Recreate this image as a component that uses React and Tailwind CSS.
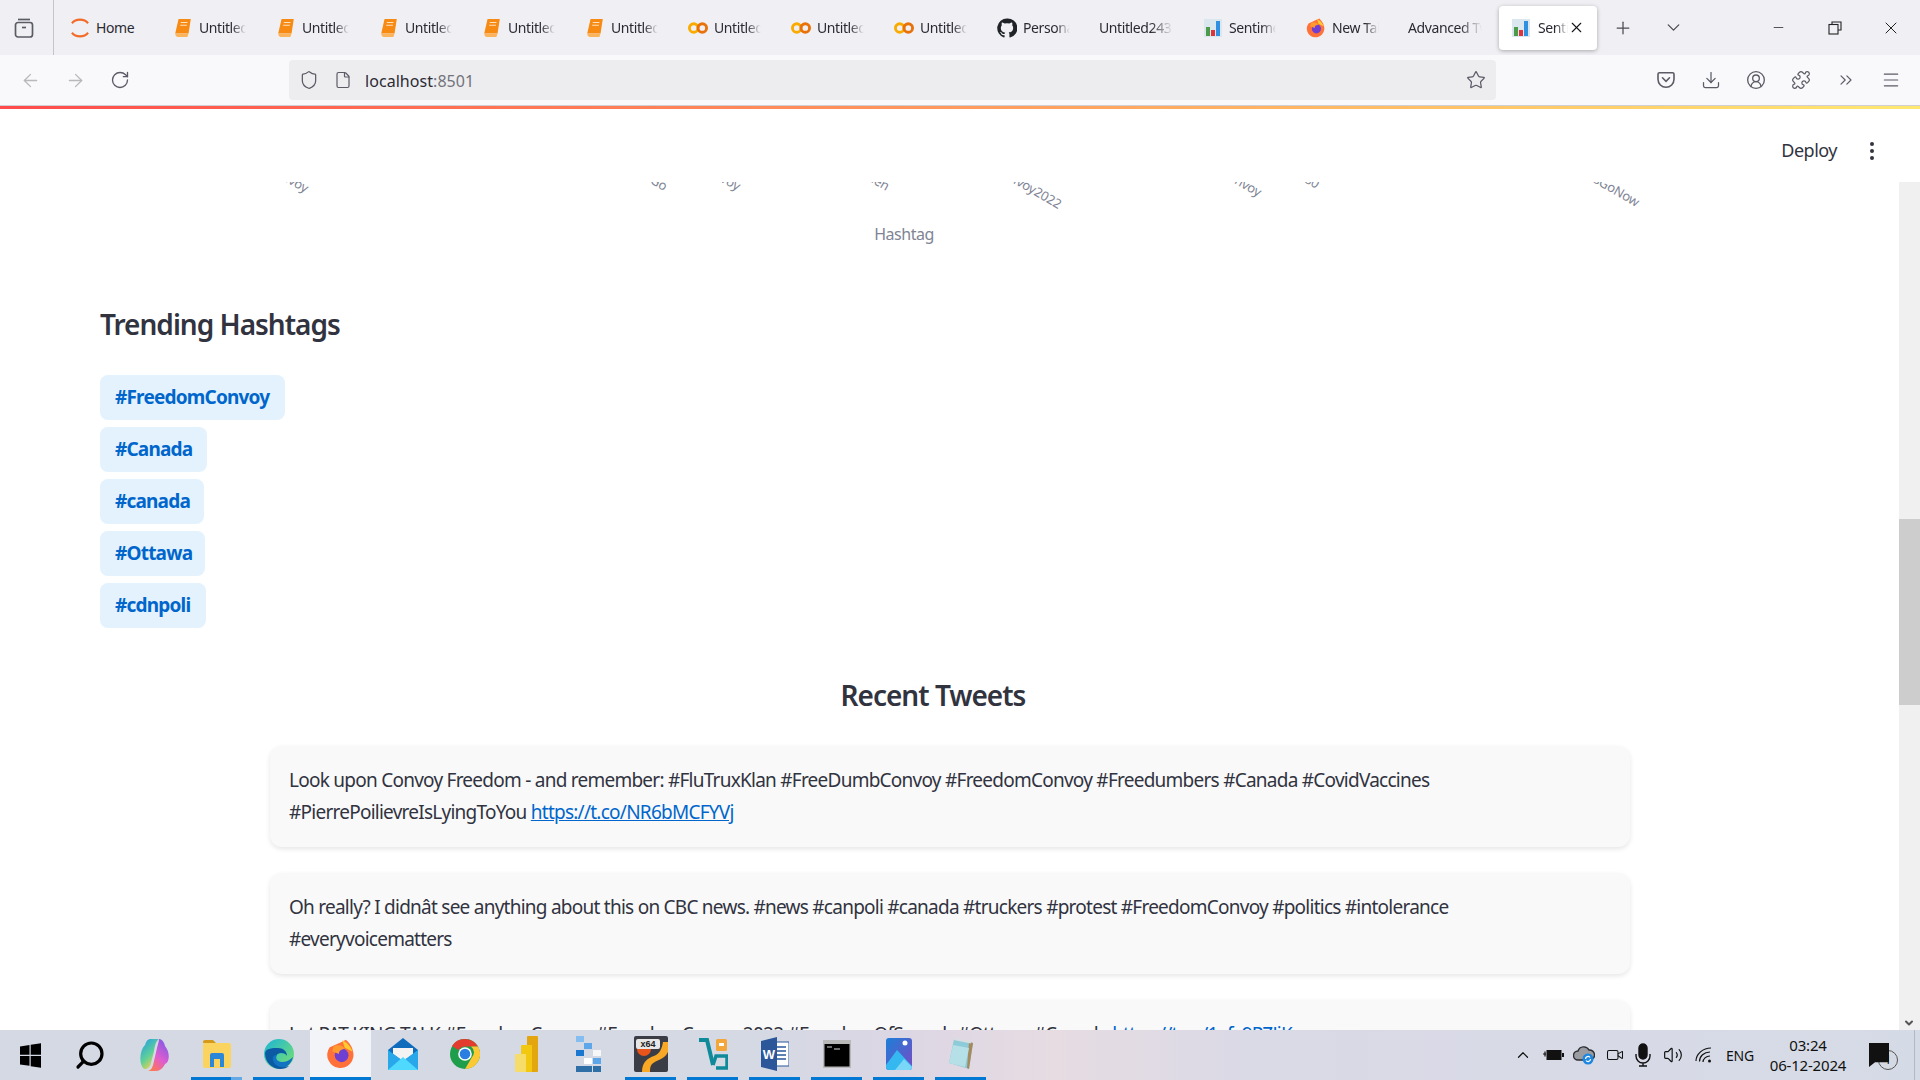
import {
  ArrowLeft, ArrowRight, RotateCw, Shield, File, Star, Download, Puzzle, ChevronsRight, Menu,
  CircleUserRound, ChevronUp, ChevronDown, Video, Volume2, Plus, X, Minus, Search,
} from 'lucide-react'

const ui = { fontFamily: '"Noto Sans", sans-serif' }

function BookIcon() {
  return (
    <svg width="20" height="20" viewBox="0 0 18 18">
      <path d="M5 1h11l-2 13H2z" fill="#f78a12" />
      <path d="M2 14c0 2 1 3 2 3h9l1-3z" fill="#fbb45c" />
      <path d="M7 4h6M6.500 6.500h6" stroke="#fde3c2" strokeWidth="1" />
    </svg>
  )
}

function ColabIcon() {
  return (
    <svg width="21" height="16" viewBox="0 0 21 16" fill="none">
      <circle cx="6" cy="8" r="4.500" stroke="#f9ab00" strokeWidth="3" />
      <circle cx="15" cy="8" r="4.500" stroke="#e8710a" strokeWidth="3" />
    </svg>
  )
}

function GithubIcon() {
  return (
    <svg width="22" height="22" viewBox="0 0 24 24" fill="#1f2328">
      <path d="M12 .5a11.700 11.700 0 0 0-3.700 22.800c.6.1.8-.3.8-.6v-2.100c-3.200.7-3.900-1.400-3.900-1.400-.5-1.400-1.300-1.700-1.300-1.700-1.100-.7.1-.7.1-.7 1.200.1 1.800 1.200 1.800 1.200 1 1.800 2.800 1.300 3.400 1 .1-.8.4-1.300.7-1.600-2.600-.3-5.300-1.300-5.300-5.700 0-1.300.5-2.300 1.200-3.100-.1-.3-.5-1.500.1-3.100 0 0 1-.3 3.200 1.200a11 11 0 0 1 5.800 0c2.200-1.500 3.200-1.200 3.200-1.200.6 1.600.2 2.800.1 3.100.8.8 1.200 1.900 1.200 3.100 0 4.400-2.700 5.400-5.300 5.700.4.4.8 1.100.8 2.200v3.300c0 .3.2.7.8.6A11.700 11.700 0 0 0 12 .5z" />
    </svg>
  )
}

function ChartFavicon() {
  return (
    <svg width="18" height="18" viewBox="0 0 18 18">
      <rect width="18" height="18" fill="#dbe7ee" />
      <rect x="2" y="8" width="4" height="9" fill="#4c9a4c" />
      <rect x="7" y="11" width="4" height="6" fill="#e0343c" />
      <rect x="12" y="2" width="4" height="15" fill="#2f8fe0" />
    </svg>
  )
}

function FirefoxIcon({ size = 20 }) {
  return (
    <svg width={size} height={size} viewBox="0 0 24 24">
      <path d="M12 2.500l4-2c2 2 5 5 5.500 9A10.500 10.500 0 1 1 3 6.500z" fill="#ff7139" />
      <path d="M13 1c4 2 7 5 8 9l-6-3z" fill="#ffcb2e" />
      <circle cx="12.500" cy="13" r="5.500" fill="#6e3fd0" />
      <path d="M6 6c3-2 8-1 9 2-3 0-5 2-4.500 4L5 10z" fill="#ff9a2e" />
    </svg>
  )
}

function HomeIcon() {
  return (
    <svg width="21" height="24" viewBox="0 0 21 24" fill="none" stroke="#f26b2a" strokeWidth="2.200">
      <path d="M2 7c4-5 13-5 17 0" />
      <path d="M2 17c4 5 13 5 17 0" />
    </svg>
  )
}

function FirefoxView() {
  return (
    <svg width="22" height="22" viewBox="0 0 22 22" fill="none" stroke="#5b5b66" strokeWidth="1.700">
      <path d="M5 2.500h12" />
      <rect x="2.500" y="5.500" width="17" height="14.500" rx="2.500" />
      <path d="M9 10.500h4" />
    </svg>
  )
}

function PocketIcon() {
  return (
    <svg width="20" height="20" viewBox="0 0 20 20" fill="none" stroke="#5b5b66" strokeWidth="1.600">
      <path d="M3.500 2.800h13a1.500 1.500 0 0 1 1.500 1.500v5a8 8 0 0 1-16 0v-5a1.500 1.500 0 0 1 1.500-1.500z" />
      <path d="M6.500 7.800l3.500 3.500 3.500-3.500" strokeLinecap="round" />
    </svg>
  )
}

function WinLogo() {
  return (
    <svg width="21" height="25" viewBox="0 0 21 25" fill="#000">
      <path d="M0 3.500l9.500-1.500v9.800H0zM10.700 1.800L21 .2v11.600H10.700zM0 13h9.500v9.800L0 21.500zM10.700 13H21v11.800l-10.300-1.600z" />
    </svg>
  )
}

function Copilot() {
  return (
    <svg width="30" height="34" viewBox="0 0 30 34">
      <defs>
        <linearGradient id="cpa" x1="0" y1="0" x2="0.6" y2="1">
          <stop offset="0" stopColor="#1f9ce8" />
          <stop offset="0.6" stopColor="#5fcf9a" />
          <stop offset="1" stopColor="#f2d24a" />
        </linearGradient>
        <linearGradient id="cpb" x1="0.8" y1="0" x2="0.2" y2="1">
          <stop offset="0" stopColor="#7d5be6" />
          <stop offset="0.55" stopColor="#e05ccf" />
          <stop offset="1" stopColor="#ff7a4a" />
        </linearGradient>
      </defs>
      <path d="M11 1h9c-3 2-4 6-5 12l-3 12c-1 4-3 6-7 6-5-4-5-18 1-24 1-4 3-6 5-6z" fill="url(#cpa)" />
      <path d="M20 1c3 0 5 3 6 7 5 6 5 16 0 18-2 4-5 7-9 7H9c4-1 5-5 6-10l3-13c1-4 2-7 2-9z" fill="url(#cpb)" />
    </svg>
  )
}

function Explorer() {
  return (
    <svg width="28" height="28" viewBox="0 0 28 28">
      <path d="M0 2a2 2 0 0 1 2-2h8l3 3h-13z" fill="#d69a1a" />
      <rect y="3" width="28" height="25" rx="2" fill="#fbd45f" />
      <path d="M7 27V15a2 2 0 0 1 2-2h10a2 2 0 0 1 2 2v12h-4v-8h-6v8z" fill="#2b87d8" />
    </svg>
  )
}

function Edge() {
  return (
    <svg width="30" height="30" viewBox="0 0 30 30">
      <defs>
        <linearGradient id="edg" x1="0" y1="0" x2="1" y2="1">
          <stop offset="0" stopColor="#1bb4d8" />
          <stop offset="1" stopColor="#7be36b" />
        </linearGradient>
      </defs>
      <circle cx="15" cy="15" r="15" fill="url(#edg)" />
      <path d="M1 14C1 24 9 30 16 30c4 0 7-1 9-3-6 2-13 0-14-5-1-4 2-8 6-8 3 0 5 1 6 3 0-5-4-8-9-8S2 9 1 14z" fill="#0c59a4" />
      <path d="M13 16c-2 3 0 7 5 7 4 0 8-2 11-5-1 4-3 8-8 10-6 1-11-2-12-7-1-3 1-5 4-5z" fill="#1173c2" />
    </svg>
  )
}

function Mail() {
  return (
    <svg width="30" height="34" viewBox="0 0 30 34">
      <path d="M15 1L0 13v20h30V13z" fill="#0f6cbd" />
      <path d="M5 11h20v6l-10 7-10-7z" fill="#f3f3f3" />
      <path d="M0 13l15 11 15-11v20H0z" fill="#28a8ea" />
      <path d="M0 33l15-13 15 13z" fill="#50d9ff" />
    </svg>
  )
}

function Chrome() {
  return (
    <svg width="30" height="30" viewBox="0 0 30 30">
      <circle cx="15" cy="15" r="15" fill="#1e9e4a" />
      <path d="M15 0a15 15 0 0 1 13 7.500H15a7.500 7.500 0 0 0-6.500 3.700L2 7a15 15 0 0 1 13-7z" fill="#e33b2e" />
      <path d="M28 7.500A15 15 0 0 1 15 30l6.500-11A7.500 7.500 0 0 0 21 7.500z" fill="#fcc934" />
      <circle cx="15" cy="15" r="6.800" fill="#fff" />
      <circle cx="15" cy="15" r="5.300" fill="#2a7de1" />
    </svg>
  )
}

function PowerBi() {
  return (
    <svg width="23" height="36" viewBox="0 0 23 36">
      <rect x="12" y="0" width="11" height="36" rx="1" fill="#e3a60f" />
      <rect x="6" y="9" width="11" height="27" rx="1" fill="#f2c811" />
      <rect x="0" y="18" width="11" height="18" rx="1" fill="#f6dd6a" />
    </svg>
  )
}

function Blocks() {
  return (
    <svg width="26" height="36" viewBox="0 0 26 36">
      <rect x="0" y="0" width="8" height="6" fill="#84bdf0" />
      <rect x="8" y="7" width="8" height="6" fill="#5ea6ea" />
      <rect x="0" y="14" width="8" height="6" fill="#1b78d0" />
      <rect x="17" y="14" width="8" height="6" fill="#f7f7f7" />
      <rect x="8" y="22" width="8" height="6" fill="#fff" />
      <rect x="17" y="22" width="8" height="6" fill="#5ea6ea" />
      <rect x="0" y="30" width="8" height="6" fill="#2f6fa8" />
      <rect x="8" y="30" width="8" height="6" fill="#2f6fa8" />
      <rect x="17" y="30" width="8" height="6" fill="#2f6fa8" />
    </svg>
  )
}

function X264() {
  return (
    <svg width="34" height="36" viewBox="0 0 34 36">
      <rect width="34" height="36" rx="2" fill="#3a3d45" />
      <path d="M8 36c0-10 6-14 12-16 6-2 8-8 9-14h5v10c-4 8-12 8-16 12-2 2-2 5-2 8z" fill="#f9a825" />
      <circle cx="10" cy="13" r="7" fill="#e8541a" />
      <rect x="2" y="3" width="24" height="10" rx="2" fill="#e7e7e7" />
      <text x="14" y="11" textAnchor="middle" fontSize="9" fontWeight="700" fill="#222" fontFamily="Liberation Sans, sans-serif">x64</text>
    </svg>
  )
}

function VsLogo() {
  return (
    <svg width="30" height="34" viewBox="0 0 30 34" fill="none">
      <path d="M1 3h8l6 25" stroke="#0f8a9a" strokeWidth="4" />
      <path d="M15 28l3-9h11v12H18" stroke="#0f8a9a" strokeWidth="3.500" />
      <rect x="18" y="2" width="11" height="12" rx="1.500" fill="#f3a63a" />
      <rect x="21" y="6" width="5" height="3" fill="#fff" />
    </svg>
  )
}

function Word() {
  return (
    <svg width="28" height="34" viewBox="0 0 28 34">
      <rect x="12" y="5" width="16" height="24" fill="#fff" stroke="#2b579a" />
      <path d="M16 10h9M16 14h9M16 18h9M16 22h9" stroke="#2b579a" strokeWidth="1.500" />
      <path d="M0 4l16-4v34L0 30z" fill="#2b579a" />
      <text x="8" y="22" textAnchor="middle" fontSize="13" fontWeight="700" fill="#fff" fontFamily="Liberation Sans, sans-serif">W</text>
    </svg>
  )
}

function Terminal() {
  return (
    <svg width="28" height="28" viewBox="0 0 28 28">
      <rect width="28" height="28" fill="#b8b8b8" />
      <rect x="1.500" y="4" width="25" height="22.500" fill="#000" />
      <path d="M4 7h5M11 9h6" stroke="#d8d8d8" strokeWidth="1.200" />
    </svg>
  )
}

function Photos() {
  return (
    <svg width="26" height="32" viewBox="0 0 26 32">
      <defs>
        <linearGradient id="pho" x1="0" y1="0" x2="1" y2="1">
          <stop offset="0" stopColor="#1b7fd8" />
          <stop offset="1" stopColor="#7a4bc4" />
        </linearGradient>
      </defs>
      <rect width="26" height="32" rx="3" fill="url(#pho)" />
      <circle cx="19" cy="5" r="2.500" fill="#fff" />
      <path d="M0 27l11-15 15 16v1a3 3 0 0 1-3 3H3a3 3 0 0 1-3-3z" fill="#35b7f0" />
      <path d="M9 32l9-11 8 8v0a3 3 0 0 1-3 3z" fill="#7ad7f7" />
    </svg>
  )
}

function Notepad() {
  return (
    <svg width="28" height="32" viewBox="0 0 28 32">
      <path d="M7 1l19 4-4 26-20-6z" fill="#8ecbd8" />
      <path d="M22 4l4 1-4 26-2-1z" fill="#a58a5e" />
      <path d="M7 1l17 3.500" stroke="#d7dde0" strokeWidth="2" />
      <path d="M6 7l16 3-4 19L2 25z" fill="#b6e0e8" />
    </svg>
  )
}

function TrayCloud() {
  return (
    <svg width="22" height="20" viewBox="0 0 22 20">
      <path d="M5 15a4.500 4.500 0 0 1 0-9 6 6 0 0 1 11-1 5 5 0 0 1 1 10z" fill="#9a9ca2" stroke="#2c2e33" strokeWidth="1.400" />
      <circle cx="15" cy="14" r="5.500" fill="#1c86e0" />
      <path d="M12.500 14a2.500 2.500 0 0 1 4.500-1.500M17.500 14a2.500 2.500 0 0 1-4.500 1.500" stroke="#fff" strokeWidth="1.200" fill="none" />
    </svg>
  )
}

function TrayBattery() {
  return (
    <svg width="21" height="14" viewBox="0 0 21 14">
      <path d="M0 6h3M2 3.500v5" stroke="#111" strokeWidth="1.200" />
      <rect x="3.500" y="2" width="15" height="10" fill="#111" />
      <rect x="19" y="5" width="2" height="4" fill="#111" />
    </svg>
  )
}

function TrayMic() {
  return (
    <svg width="20" height="24" viewBox="0 0 20 24" fill="none" stroke="#111" strokeWidth="1.400">
      <rect x="6" y="1" width="8" height="15" rx="4" fill="#111" />
      <path d="M3 11v2a7 7 0 0 0 14 0v-2M10 20v3M6 23h8" />
    </svg>
  )
}

function TrayWifi() {
  return (
    <svg width="18" height="18" viewBox="0 0 18 18" fill="none" stroke="#111" strokeWidth="1.200">
      <path d="M1 15C1 8 8 2 16 2" />
      <path d="M4.500 15.500C4.500 10 9 6 15 6" />
      <path d="M8 16c0-3 3-6 7-6" />
      <circle cx="14.500" cy="15" r="1.500" fill="#111" stroke="none" />
    </svg>
  )
}

const tabs = [
  { label: 'Home', icon: <HomeIcon />, fade: false },
  { label: 'Untitled', icon: <BookIcon /> },
  { label: 'Untitled', icon: <BookIcon /> },
  { label: 'Untitled', icon: <BookIcon /> },
  { label: 'Untitled', icon: <BookIcon /> },
  { label: 'Untitled', icon: <BookIcon /> },
  { label: 'Untitled', icon: <ColabIcon /> },
  { label: 'Untitled', icon: <ColabIcon /> },
  { label: 'Untitled', icon: <ColabIcon /> },
  { label: 'Personal', icon: <GithubIcon /> },
  { label: 'Untitled243', icon: null },
  { label: 'Sentiment', icon: <ChartFavicon /> },
  { label: 'New Tab', icon: <FirefoxIcon /> },
  { label: 'Advanced Tweet', icon: null },
]

const chartLabels = [
  ['#FreedomConvoy', 305, 11],
  ['#TruckersGo', 664, 9],
  ['#Convoy', 737, 9],
  ['#Canadaen', 886, 9],
  ['#FreedomConvoy2022', 1058, 27],
  ['#FreedomConvoy', 1258, 15],
  ['#1780', 1316, 7],
  ['#TruckersGoNow', 1636, 25],
]

const hashtags = [
  ['#FreedomConvoy', 'w-[185px]'],
  ['#Canada', 'w-[107px]'],
  ['#canada', 'w-[104px]'],
  ['#Ottawa', 'w-[105px]'],
  ['#cdnpoli', 'w-[106px]'],
]

const taskbarApps = [
  { el: <Explorer />, line: true, lighter: true },
  { el: <Edge />, line: true },
  { el: <FirefoxIcon size={30} />, line: true, active: true },
  { el: <Mail /> },
  { el: <Chrome /> },
  { el: <PowerBi /> },
  { el: <Blocks /> },
  { el: <X264 />, line: true },
  { el: <VsLogo />, line: true },
  { el: <Word />, line: true },
  { el: <Terminal />, line: true },
  { el: <Photos />, line: true },
  { el: <Notepad />, line: true },
]

function Tab({ tab }) {
  return (
    <div className={`flex h-full w-[103px] shrink-0 items-center gap-[6px] ${tab.icon ? 'pl-[13px]' : 'pl-[12px]'}`}>
      {tab.icon && <span className="flex w-[20px] shrink-0 justify-center">{tab.icon}</span>}
      <span className={`overflow-hidden whitespace-nowrap text-[14px] tracking-[-0.4px] text-[#2b2a33] ${tab.icon ? 'w-[47px]' : 'w-[74px]'} ${tab.fade === false ? '' : '[mask-image:linear-gradient(to_right,black_70%,transparent)]'}`}>
        {tab.label}
      </span>
    </div>
  )
}

function TabStrip() {
  return (
    <div className="flex h-[55px] items-center bg-[#f0f0f4]">
      <div className="flex h-full w-[54px] shrink-0 items-center justify-center border-r border-[#c4c4ca] pr-[5px]">
        <FirefoxView />
      </div>
      <div className="ml-[3px] flex h-full">
        {tabs.map((t, i) => <Tab key={i} tab={t} />)}
      </div>
      <div className="flex h-[44px] w-[98px] shrink-0 items-center rounded-[4px] bg-white pl-[13px] shadow-[0_1px_4px_rgba(0,0,0,0.3)]">
        <ChartFavicon />
        <span className="ml-[8px] w-[30px] overflow-hidden whitespace-nowrap text-[14px] tracking-[-0.4px] text-[#2b2a33] [mask-image:linear-gradient(to_right,black_60%,transparent)]">Sentiment</span>
        <X size={17} strokeWidth={1.6} className="text-[#15141a]" />
      </div>
      <Plus size={20} strokeWidth={1.5} className="ml-[16px] text-[#4a4a52]" />
      <ChevronDown size={21} strokeWidth={1.5} className="ml-[30px] text-[#4a4a52]" />
      <div className="ml-auto flex items-center">
        <Minus size={15} strokeWidth={1.2} className="mr-[42px] text-[#222]" />
        <svg width="14" height="14" viewBox="0 0 14 14" fill="none" stroke="#222" strokeWidth="1.100" className="mr-[39px]">
          <path d="M4 3V1h9v8h-3" />
          <rect x="1" y="3.500" width="9" height="9.500" />
        </svg>
        <X size={20} strokeWidth={1.2} className="mr-[19px] text-[#222]" />
      </div>
    </div>
  )
}

function Toolbar() {
  return (
    <div className="flex h-[50px] items-center bg-[#f9f9fb]">
      <ArrowLeft size={21} strokeWidth={1.5} className="ml-[20px] text-[#b9b9bd]" />
      <ArrowRight size={21} strokeWidth={1.5} className="ml-[24px] text-[#b9b9bd]" />
      <RotateCw size={20} strokeWidth={1.6} className="ml-[24px] text-[#5b5b66]" />
      <div className="ml-[159px] flex h-[40px] w-[1207px] items-center rounded-[4px] bg-[#ededf0] pl-[10px] pr-[10px]">
        <Shield size={20} strokeWidth={1.5} className="text-[#5b5b66]" />
        <File size={18} strokeWidth={1.6} className="ml-[15px] text-[#5b5b66]" />
        <span className="ml-[13px] pt-[2px] text-[16px] tracking-[0.05px] text-[#2b2a33]">
          localhost<span className="text-[#73737b]">:8501</span>
        </span>
        <Star size={20} strokeWidth={1.5} className="ml-auto text-[#5b5b66]" />
      </div>
      <div className="ml-auto flex items-center gap-[25px] pr-[19px]">
        <PocketIcon />
        <Download size={20} strokeWidth={1.5} className="text-[#5b5b66]" />
        <CircleUserRound size={20} strokeWidth={1.6} className="text-[#5b5b66]" />
        <Puzzle size={20} strokeWidth={1.5} className="text-[#5b5b66]" />
        <ChevronsRight size={20} strokeWidth={1.4} className="text-[#5b5b66]" />
        <Menu size={20} strokeWidth={1.4} className="text-[#5b5b66]" />
      </div>
    </div>
  )
}

function ChartTail() {
  return (
    <svg width="1899" height="80" viewBox="0 182 1899 80" className="block" style={{ fontFamily: '"Noto Sans", sans-serif' }}>
      {chartLabels.map(([label, x, y]) => (
        <text key={x} x={x} y={182 + y} textAnchor="end" fontSize="13" letterSpacing="-0.2" fill="#808495" transform={`rotate(30 ${x} ${182 + y})`}>
          {label}
        </text>
      ))}
      <text x="904" y="240" textAnchor="middle" fontSize="16" fill="#808495" letterSpacing="-0.5">Hashtag</text>
    </svg>
  )
}

function TweetCard({ children }) {
  return (
    <div className="rounded-[12px] bg-[#f9f9fa] px-[19px] pt-[18px] pb-[19px] text-[19px] leading-[32px] tracking-[-0.75px] text-[#31333f] shadow-[0_2px_5px_rgba(0,0,0,0.1)]">
      {children}
    </div>
  )
}

function Page() {
  return (
    <div className="flex min-h-0 flex-1 flex-col bg-white" style={ui}>
      <div className="flex h-[73px] shrink-0 items-center justify-end pt-[10px] pr-[46px]">
        <span className="text-[18px] tracking-[-0.5px] text-[#31333f]">Deploy</span>
        <span className="ml-[33px] flex flex-col gap-[3px]">
          <span className="h-[4px] w-[4px] rounded-full bg-[#31333f]" />
          <span className="h-[4px] w-[4px] rounded-full bg-[#31333f]" />
          <span className="h-[4px] w-[4px] rounded-full bg-[#31333f]" />
        </span>
      </div>
      <div className="flex min-h-0 flex-1">
        <div className="min-w-0 flex-1 overflow-hidden">
          <ChartTail />
          <div className="pl-[100px] pr-[99px] pt-[42px]">
            <h2 className="text-[28px] leading-[40px] font-semibold tracking-[-1px] text-[#31333f]">Trending Hashtags</h2>
            <div className="mt-[31px] flex flex-col items-start gap-[7px]">
              {hashtags.map(([tag, w]) => (
                <span key={tag} className={`h-[45px] rounded-[8px] bg-[#e3f2fd] pl-[15px] text-[19px] leading-[45px] font-bold tracking-[-0.8px] text-[#0066cc] ${w}`}>
                  {tag}
                </span>
              ))}
            </div>
            <h2 className="mt-[47px] pr-[34px] text-center text-[28px] leading-[40px] font-semibold tracking-[-1px] text-[#31333f]">Recent Tweets</h2>
            <div className="mt-[31px] ml-[170px] mr-[170px] flex flex-col gap-[26px]">
              <TweetCard>
                Look upon Convoy Freedom - and remember: #FluTruxKlan #FreeDumbConvoy #FreedomConvoy #Freedumbers #Canada #CovidVaccines #PierrePoilievreIsLyingToYou{' '}
                <a href="#" className="text-[#0066cc] underline">https://t.co/NR6bMCFYVj</a>
              </TweetCard>
              <TweetCard>
                Oh really? I didnât see anything about this on CBC news. #news #canpoli #canada #truckers #protest #FreedomConvoy #politics #intolerance #everyvoicematters
              </TweetCard>
              <TweetCard>
                Let PAT KING TALK #FreedomConvoy #FreedomConvoy2022 #FreedomOfSpeech #Ottawa #Canada{' '}
                <a href="#" className="text-[#0066cc] underline">https://t.co/1xfy9PZJiK</a>
              </TweetCard>
            </div>
          </div>
        </div>
        <div className="flex w-[21px] shrink-0 flex-col bg-[#f0f0f0]">
          <div className="mt-[337px] h-[186px] bg-[#cdcdcd]" />
          <ChevronDown size={12} strokeWidth={4} className="mt-auto ml-[4px] mb-[1px] text-[#555]" />
        </div>
      </div>
    </div>
  )
}

function Taskbar() {
  return (
    <div className="flex h-[50px] shrink-0 items-stretch bg-[linear-gradient(90deg,#d5d9e4_0%,#d5d9e4_40%,#dcd6e4_47%,#e6dce2_55%,#dad9e6_65%,#d5dbe6_100%)] text-[#111]" style={ui}>
      <div className="flex w-[60px] items-center justify-center"><WinLogo /></div>
      <div className="flex w-[59px] items-center justify-center">
        <Search size={32} strokeWidth={2.4} className="-scale-x-100 text-black" />
      </div>
      <div className="flex w-[70px] items-center justify-center"><Copilot /></div>
      <div className="flex pl-[2px]">
        {taskbarApps.map((a, i) => (
          <div
            key={i}
            className={`relative flex h-full items-center justify-center border-b-[3px] ${a.active ? '-ml-[5px] mr-[6px] w-[61px] bg-[#f3f4f8]' : 'mr-[11px] w-[51px]'} ${a.line ? 'border-[#0078d4]' : 'border-transparent'}`}
          >
            {a.el}
            {a.lighter && <span className="absolute right-0 -bottom-[3px] h-[3px] w-[11px] bg-[#62a9e6]" />}
          </div>
        ))}
      </div>
      <div className="ml-auto flex items-center">
        <ChevronUp size={18} strokeWidth={1.6} />
        <span className="ml-[11px]"><TrayBattery /></span>
        <span className="ml-[9px]"><TrayCloud /></span>
        <Video size={18} strokeWidth={1.4} className="ml-[11px]" />
        <span className="ml-[9px]"><TrayMic /></span>
        <Volume2 size={20} strokeWidth={1.4} className="ml-[10px]" />
        <span className="ml-[12px]"><TrayWifi /></span>
        <span className="ml-[13px] text-[14px] tracking-[-0.2px]">ENG</span>
        <div className="ml-[16px] flex w-[76px] flex-col items-center whitespace-nowrap text-[15px] leading-[20px] tracking-[-0.2px]">
          <span>03:24</span>
          <span>06-12-2024</span>
        </div>
        <div className="ml-[23px] h-[24px] w-[20px] bg-[#111] [clip-path:polygon(0_0,100%_0,100%_80%,30%_80%,0_100%)]" />
        <span className="-ml-[11px] mt-[10px] flex h-[20px] w-[20px] items-center justify-center rounded-full border border-[#555] bg-[#d5d9e4] text-[12px]">1</span>
        <span className="ml-[16px] h-full w-px bg-[#b4b8c2]" />
        <span className="w-[5px]" />
      </div>
    </div>
  )
}

export default function App() {
  return (
    <div className="flex h-screen flex-col overflow-hidden bg-white" style={ui}>
      <TabStrip />
      <Toolbar />
      <div className="h-[4px] shrink-0 border-t border-[#d0d0d4] bg-[linear-gradient(90deg,#ff4b4b,#ffe970)]" />
      <Page />
      <Taskbar />
    </div>
  )
}
